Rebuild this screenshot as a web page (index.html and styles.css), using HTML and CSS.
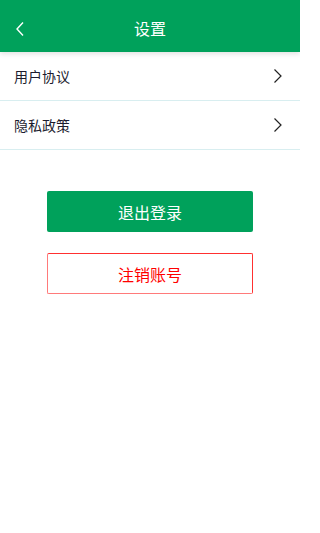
FILE: index.html
```html
<!DOCTYPE html>
<html lang="zh">
<head>
<meta charset="utf-8">
<meta name="viewport" content="width=device-width, initial-scale=1">
<title>设置</title>
<link rel="stylesheet" href="styles.css">
</head>
<body>
<div class="page">
  <header class="topbar">
    <span class="back">
      <svg width="10" height="16" viewBox="0 0 10 16"><path d="M8 1.5 L2 8 L8 14.5" fill="none" stroke="#fff" stroke-width="1.4"/></svg>
    </span>
    <h1 class="title">设置</h1>
  </header>
  <ul class="menu">
    <li class="menu-item">
      <span class="label">用户协议</span>
      <svg class="chev" width="10" height="16" viewBox="0 0 10 16"><path d="M1.5 1.5 L8 8 L1.5 14.5" fill="none" stroke="#222" stroke-width="1.2"/></svg>
    </li>
    <li class="menu-item">
      <span class="label">隐私政策</span>
      <svg class="chev" width="10" height="16" viewBox="0 0 10 16"><path d="M1.5 1.5 L8 8 L1.5 14.5" fill="none" stroke="#222" stroke-width="1.2"/></svg>
    </li>
  </ul>
  <div class="actions">
    <button class="btn btn-primary">退出登录</button>
    <button class="btn btn-danger">注销账号</button>
  </div>
</div>
</body>
</html>
```
FILE: styles.css
```css
* { box-sizing: border-box; }
html, body { margin: 0; padding: 0; background: #fff; }
body {
  font-family: "Noto Sans CJK SC", "Noto Sans", sans-serif;
  width: 300px;
  height: 533px;
  overflow: hidden;
}
.page { display: flex; flex-direction: column; }
.topbar {
  height: 52px;
  background: #00a15b;
  display: flex;
  align-items: center;
  justify-content: center;
  position: relative;
  box-shadow: 0 2px 5px rgba(0,0,0,0.12);
  z-index: 1;
}
.back {
  position: absolute;
  left: 15px;
  top: 21px;
  display: flex;
}
.title {
  margin: 0;
  font-size: 16px;
  font-weight: normal;
  color: #fff;
  line-height: 1;
  padding-top: 4px;
}
.menu { list-style: none; margin: 0; padding: 0; }
.menu-item {
  height: 49px;
  display: flex;
  align-items: center;
  justify-content: space-between;
  padding: 0 17px 0 14px;
  border-bottom: 1px solid #d8eef0;
}
.label {
  font-size: 14px;
  color: #1c1c2e;
  line-height: 1;
  padding-bottom: 1px;
}
.chev { display: block; }
.actions {
  display: flex;
  flex-direction: column;
  align-items: center;
  gap: 21px;
  padding-top: 41px;
}
.btn {
  width: 206px;
  height: 41px;
  font-family: "Noto Sans CJK SC", "Noto Sans", sans-serif;
  font-size: 16px;
  border-radius: 2px;
  padding: 0;
  line-height: 1;
}
.btn-primary {
  background: #00a15b;
  color: #fff;
  border: none;
}
.btn-danger {
  background: #fff;
  color: #f00;
  border: 1px solid #ff3030;
  border-bottom-color: #ff7a7a;
  border-left-color: #ff7a7a;
}
```
